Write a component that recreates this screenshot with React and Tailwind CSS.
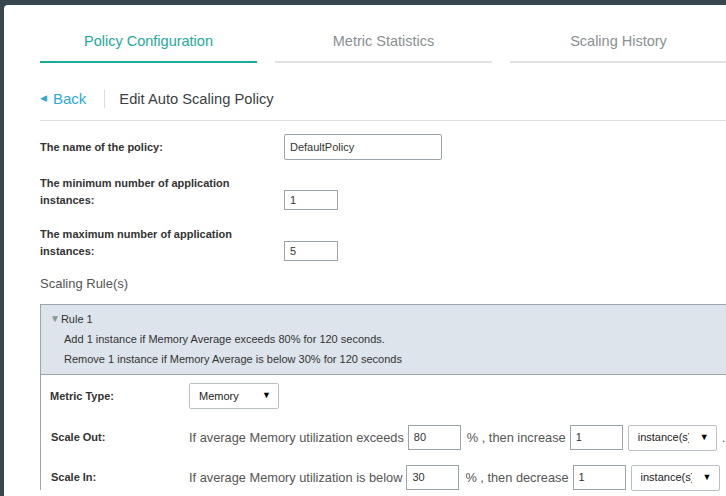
import React from "react";

const F = { fontFamily: '"Liberation Sans", Arial, sans-serif' };

function Select({ value, w, clip }) {
  return (
    <div className={`flex items-center justify-between h-[26px] border border-[#b9bfc4] rounded-[2px] bg-white pl-[9px] pr-[7px] text-[11px] text-[#222] ${w}`}>
      <span className={clip ? "w-[51px] overflow-hidden whitespace-nowrap" : ""}>{value}</span>
      <span className="text-[9px] text-black">▼</span>
    </div>
  );
}

function Box({ value, w, h = "h-[26px]", extra = "" }) {
  return (
    <div className={`flex items-center border border-[#9aa4ab] bg-white pl-[5px] text-[11px] text-[#333] ${w} ${h} ${extra}`}>
      {value}
    </div>
  );
}

export default function App() {
  return (
    <div className="w-[726px] h-[496px] overflow-hidden bg-[#37474f] pl-[4px] pt-[5px]" style={F}>
      <div className="h-full w-[760px] bg-white rounded-tl-[4px] pl-[36px]">
        {/* tabs */}
        <div className="flex gap-[18px]">
          <div className="w-[217px] pt-[27px] pb-[11px] text-center text-[14.5px] leading-[18px] text-[#22a99a] border-b-2 border-[#1aab96]">
            Policy Configuration
          </div>
          <div className="w-[217px] pt-[27px] pb-[11px] text-center text-[14.5px] leading-[18px] text-[#8a8f93] border-b-2 border-[#e2e2e2]">
            Metric Statistics
          </div>
          <div className="w-[217px] pt-[27px] pb-[11px] text-center text-[14.5px] leading-[18px] text-[#8a8f93] border-b-2 border-[#e2e2e2]">
            Scaling History
          </div>
        </div>

        {/* back row */}
        <div className="flex items-center pt-[27px] pb-[12px] border-b border-[#dddddd]">
          <span className="text-[9px] text-[#2aa8d8] mr-[5px]">◀</span>
          <span className="text-[15px] leading-[18px] text-[#2aa8d8] ml-[1px]">Back</span>
          <div className="w-px h-[18px] bg-[#dcdcdc] ml-[18px] mr-[14px]"></div>
          <span className="text-[14.7px] leading-[18px] text-[#3a3f44]">Edit Auto Scaling Policy</span>
        </div>

        {/* form */}
        <div className="pt-[13px]">
          <div className="flex items-center h-[26px]">
            <div className="w-[244px] text-[11px] font-bold text-[#333]">The name of the policy:</div>
            <Box value="DefaultPolicy" w="w-[158px] rounded-[2px]" />
          </div>
          <div className="flex items-end mt-[15px]">
            <div className="w-[244px] text-[11px] leading-[17px] font-bold text-[#333]">
              The minimum number of application
              <br />
              instances:
            </div>
            <Box value="1" w="w-[54px]" h="h-[20px]" extra="mb-[-1px]" />
          </div>
          <div className="flex items-end mt-[17px]">
            <div className="w-[244px] text-[11px] leading-[17px] font-bold text-[#333]">
              The maximum number of application
              <br />
              instances:
            </div>
            <Box value="5" w="w-[54px]" h="h-[20px]" extra="mb-[-1px]" />
          </div>
          <div className="mt-[16px] text-[13px] leading-[16px] text-[#555]">Scaling Rule(s)</div>
        </div>

        {/* rule */}
        <div className="mt-[12px] border-l border-t border-[#9aa5ae]">
          <div className="bg-[#dde4eb] border-b border-[#9aa5ae] pt-[4px] pb-[5px] text-[11px] leading-[20px] text-[#333]">
            <div className="flex items-center pl-[9px]">
              <span className="text-[10px] text-[#8a939a] mr-[1px]">▼</span>
              <span>Rule 1</span>
            </div>
            <div className="pl-[23px]">Add 1 instance if Memory Average exceeds 80% for 120 seconds.</div>
            <div className="pl-[23px]">Remove 1 instance if Memory Average is below 30% for 120 seconds</div>
          </div>
          <div className="pt-[8px] pl-[9px]">
            <div className="flex items-center h-[26px]">
              <div className="w-[139px] text-[11px] font-bold text-[#333]">Metric Type:</div>
              <Select value="Memory" w="w-[90px]" />
            </div>
            <div className="flex items-center h-[25px] mt-[16px] text-[12.8px] text-[#555]">
              <div className="w-[139px] pl-[1px] text-[11px] font-bold text-[#333]">Scale Out:</div>
              <span className="mr-[4px]">If average Memory utilization exceeds</span>
              <Box value="80" w="w-[53px]" h="h-[25px]" />
              <span className="ml-[6px] mr-[4px]">% , then increase</span>
              <Box value="1" w="w-[53px]" h="h-[25px]" />
              <div className="ml-[5px]">
                <Select value="instance(s)" w="w-[89px]" clip />
              </div>
              <span className="ml-[5px]">.</span>
            </div>
            <div className="flex items-center h-[25px] mt-[15px] text-[12.8px] text-[#555]">
              <div className="w-[139px] pl-[1px] text-[11px] font-bold text-[#333]">Scale In:</div>
              <span className="mr-[4px]">If average Memory utilization is below</span>
              <Box value="30" w="w-[53px]" h="h-[25px]" />
              <span className="ml-[6px] mr-[4px]">% , then decrease</span>
              <Box value="1" w="w-[53px]" h="h-[25px]" />
              <div className="ml-[5px]">
                <Select value="instance(s)" w="w-[89px]" clip />
              </div>
            </div>
          </div>
        </div>
      </div>
    </div>
  );
}
